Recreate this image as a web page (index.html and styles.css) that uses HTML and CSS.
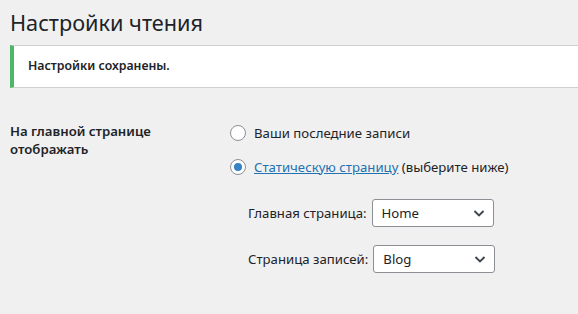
FILE: index.html
```html
<!DOCTYPE html>
<html lang="ru">
<head>
  <meta charset="UTF-8">
  <title>Настройки чтения</title>
  <link rel="stylesheet" href="styles.css">
</head>
<body>

  <div class="wrap">
    <h1>Настройки чтения</h1>

    <div class="notice">
      <p><strong>Настройки сохранены.</strong></p>
    </div>

    <div class="form-row">
      <div class="row-label">На главной странице отображать</div>
      <div class="row-field">
        <label class="radio-line">
          <span class="radio"></span>
          Ваши последние записи
        </label>
        <label class="radio-line">
          <span class="radio checked"></span>
          <span><a href="#">Статическую страницу</a> (выберите ниже)</span>
        </label>

        <div class="page-pickers">
          <div class="picker">
            <span>Главная страница:</span>
            <div class="select">Home
              <svg width="12" height="12" viewBox="0 0 12 12"><path d="M1.5 4l4.5 4.5 4.5-4.5" fill="none" stroke="#3c434a" stroke-width="1.8"/></svg>
            </div>
          </div>
          <div class="picker">
            <span>Страница записей:</span>
            <div class="select">Blog
              <svg width="12" height="12" viewBox="0 0 12 12"><path d="M1.5 4l4.5 4.5 4.5-4.5" fill="none" stroke="#3c434a" stroke-width="1.8"/></svg>
            </div>
          </div>
        </div>
      </div>
    </div>
  </div>

</body>
</html>
```

FILE: styles.css
```css
body {
  margin: 0;
  background-color: #f0f0f1;
  color: #1d2327;
  font-family: 'Noto Sans', 'Open Sans', sans-serif;
  font-size: 13.2px;
}

.wrap {
  padding: 0 0 0 10px;
}

h1 {
  margin: 0;
  padding: 9px 0 3px 0;
  font-size: 21.7px;
  font-weight: 400;
  line-height: 1.3;
}

.notice {
  margin: 5px 0 15px 0;
  padding: 1px 12px;
  background: #fff;
  border-top: 1px solid #d0d0d2;
  border-bottom: 1px solid #d0d0d2;
  border-left: 4px solid #4ab866;
}

.notice p {
  margin: 8px 0;
  padding: 2px 2px;
  font-size: 12.3px;
  line-height: 1.5;
}

.notice strong {
  font-weight: 600;
}

.form-row {
  display: flex;
  padding-top: 19px;
}

.row-label {
  width: 210px;
  padding-right: 10px;
  font-weight: 600;
  line-height: 18px;
}

.row-field {
  display: flex;
  flex-direction: column;
  padding-top: 2px;
}

.radio-line {
  display: flex;
  align-items: center;
  gap: 8px;
  height: 18px;
  margin-bottom: 16px;
}

.radio {
  width: 14px;
  height: 14px;
  border: 1px solid #8c8f94;
  border-radius: 50%;
  background: #fff;
  display: flex;
  align-items: center;
  justify-content: center;
}

.radio.checked::before {
  content: "";
  width: 8px;
  height: 8px;
  border-radius: 50%;
  background: #3582c4;
}

a {
  color: #2271b1;
}

.page-pickers {
  padding-left: 18px;
  margin-top: 7px;
}

.picker {
  display: flex;
  align-items: center;
  gap: 5px;
  margin-bottom: 18px;
}

.select {
  box-sizing: border-box;
  width: 122px;
  height: 28px;
  padding: 0 8px 0 9px;
  background: #fff;
  border: 1px solid #8c8f94;
  border-radius: 3px;
  display: flex;
  align-items: center;
  justify-content: space-between;
}
```
